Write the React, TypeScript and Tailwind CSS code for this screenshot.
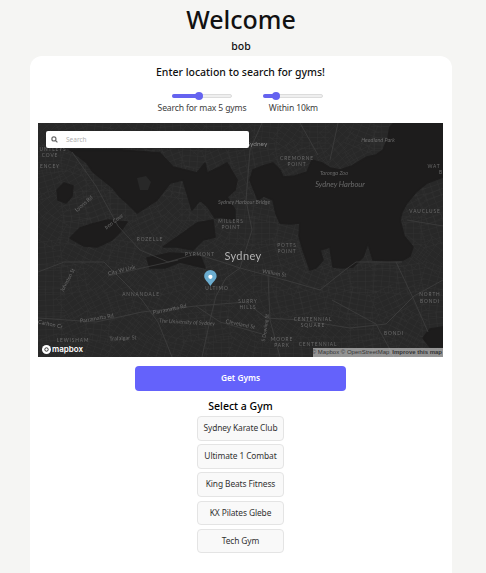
const GYMS = ["Sydney Karate Club", "Ultimate 1 Combat", "King Beats Fitness", "KX Pilates Glebe", "Tech Gym"];

// map labels in page coordinates: text, x, y, size, rotate, spaced caps, italic
const LABELS: [string, number, number, number, number, boolean, boolean][] = [
  ["Headland Park", 378, 142, 5.5, 0, false, true],
  ["CREMORNE", 297, 160, 4.8, 0, true, false],
  ["POINT", 297, 166, 4.8, 0, true, false],
  ["Taronga Zoo", 334, 175, 5.5, 0, false, true],
  ["Sydney Harbour", 340, 187, 7.5, 0, false, true],
  ["Sydney Harbour Bridge", 244, 204, 5.5, 0, false, true],
  ["MILLERS", 231, 223, 4.8, 0, true, false],
  ["POINT", 231, 229, 4.8, 0, true, false],
  ["POTTS", 287, 247, 4.8, 0, true, false],
  ["POINT", 287, 253, 4.8, 0, true, false],
  ["VAUCLUSE", 425, 213, 4.8, 0, true, false],
  ["WAT", 434, 168, 4.8, 0, true, false],
  ["B", 441, 174, 4.8, 0, true, false],
  ["UNTLEYS", 53, 151, 4.8, 0, true, false],
  ["COVE", 50, 157, 4.8, 0, true, false],
  ["ENCEY", 50, 168, 4.8, 0, true, false],
  ["Lyons Rd", 85, 205, 5.5, -40, false, false],
  ["Iron Cove", 115, 223, 5.5, -38, false, true],
  ["ROZELLE", 150, 241, 4.8, 0, true, false],
  ["PYRMONT", 200, 256, 4.8, 0, true, false],
  ["City W Link", 122, 272, 5.5, -14, false, false],
  ["Johnston St", 69, 281, 5, -62, false, false],
  ["ANNANDALE", 141, 296, 4.8, 0, true, false],
  ["ULTIMO", 217, 290, 4.8, 0, true, false],
  ["Parramatta Rd", 170, 311, 5.5, -12, false, false],
  ["Parramatta Rd", 97, 320, 5.5, -9, false, false],
  ["The University of Sydney", 187, 324, 5.5, 3, false, true],
  ["Carlton Cr", 50, 326, 5.5, 12, false, false],
  ["LEWISHAM", 73, 342, 4.8, 0, true, false],
  ["Trafalgar St", 123, 340, 5.5, -3, false, false],
  ["SURRY", 248, 303, 4.8, 0, true, false],
  ["HILLS", 248, 309, 4.8, 0, true, false],
  ["Cleveland St", 240, 326, 5.5, 12, false, false],
  ["William St", 274, 275, 5.5, 10, false, false],
  ["S Dowling St", 267, 328, 5, -82, false, false],
  ["MOORE", 282, 341, 4.8, 0, true, false],
  ["PARK", 282, 347, 4.8, 0, true, false],
  ["CENTENNIAL", 313, 321, 4.8, 0, true, false],
  ["SQUARE", 313, 327, 4.8, 0, true, false],
  ["CENTENNIAL", 318, 346, 4.8, 0, true, false],
  ["NORTH", 430, 296, 4.8, 0, true, false],
  ["BONDI", 430, 303, 4.8, 0, true, false],
  ["BONDI", 394, 335, 4.8, 0, true, false],
];

const WATER = [
  // parramatta river
  "M70 150L120 150 160 153 173 167 197 173 205 163 207 173 220 167 227 163 237 180 235 190 227 197 235 210 235 220 220 217 215 218 208 207 200 200 192 210 183 180 170 183 157 200 137 213 127 203 120 197 113 188 93 172 87 163Z",
  // main harbour
  "M253 170L263 166 273 163 280 170 283 177 295 176 307 172 312 160 322 163 330 168 340 170 352 166 367 157 376 155 383 150 388 138 390 127 394 123H443V177L435 180 427 183 416 192 407 203 402 212 400 220 404 236 413 247 410 256 403 260 388 261 373 260 368 243 363 257 353 267 343 268 333 267 330 247 320 250 323 260 316 268 310 270 303 250 299 236 300 223 290 224 280 223 276 214 273 200 264 196 258 200 254 190 250 180Z",
  // iron cove
  "M57 190L64 183 73 186 72 196 66 203 58 200Z",
  "M70 238L80 228 92 224 108 220 127 222 120 232 112 240 97 247 84 246Z",
  // white bay and blackwattle
  "M163 247L183 233 197 223 213 220 215 237 203 240 193 250 177 247Z",
  "M147 258L170 253 200 255 205 268 180 262 165 268 150 268Z",
  // bondi end
  "M423 338L430 329 443 327V347H430Z",
];

const ROADS = [
  "M72 152L96 186 118 226 140 250 168 262 196 254 222 262 240 268",
  "M240 268L292 282 320 290 345 270 356 262 402 262",
  "M38 272L64 262 104 262 120 278 142 300 158 322 172 357",
  "M108 276L142 268 178 260",
  "M142 312L196 306 246 302 266 318 300 320 350 328 386 324 414 296 443 280",
  "M38 318L96 322 142 312",
  "M202 357L210 320 216 296 226 278 240 268 252 230 246 200 250 150 262 123",
  "M268 274L270 320 280 357",
  "M196 306L220 322 262 334",
  "M300 123L318 155",
  "M338 123L330 160",
  "M407 220L443 226",
  "M396 262L414 300 428 332",
  "M332 300L376 324 394 357",
];

function mapStreets() {
  // street mesh: each 24px block gets its own grid direction, fixed seed so every render is the same
  let seed = 11;
  const rnd = () => {
    seed = (seed * 16807) % 2147483647;
    return seed / 2147483647;
  };
  const out: string[] = [];
  for (let cx = 38; cx < 443; cx += 24) {
    for (let cy = 123; cy < 357; cy += 24) {
      const a = rnd() * 1.5 - 0.75;
      const ux = Math.cos(a);
      const uy = Math.sin(a);
      for (let k = -14; k <= 14; k += 5.5) {
        const mx = cx + 12 - uy * k;
        const my = cy + 12 + ux * k;
        out.push(`M${(mx - ux * 15).toFixed(1)} ${(my - uy * 15).toFixed(1)}L${(mx + ux * 15).toFixed(1)} ${(my + uy * 15).toFixed(1)}`);
        if (Math.abs(k) < 9) {
          const nx = cx + 12 + ux * k * 1.4;
          const ny = cy + 12 + uy * k * 1.4;
          out.push(`M${(nx + uy * 15).toFixed(1)} ${(ny - ux * 15).toFixed(1)}L${(nx - uy * 15).toFixed(1)} ${(ny + ux * 15).toFixed(1)}`);
        }
      }
    }
  }
  return out.join("");
}

function MapArt() {
  return (
    <svg viewBox="38 123 405 234" className="block h-full w-full blur-[0.35px]">
      <rect x="38" y="123" width="405" height="234" fill="#282828" />
      <path d={mapStreets()} stroke="#343434" strokeWidth="0.4" fill="none" />
      {WATER.map((d, i) => (
        <path key={i} d={d} fill="#1d1c1c" stroke="#1d1c1c" strokeWidth="1.500" strokeLinejoin="round" />
      ))}
      {/* cockatoo island */}
      <path d="M137 178L146 176 151 182 148 190 140 190Z" fill="#282828" />
      {ROADS.map((d, i) => (
        <path key={i} d={d} stroke="#3f3f3f" strokeWidth="0.8" strokeLinejoin="round" fill="none" />
      ))}
      {LABELS.map(([text, x, y, size, rot, caps, italic], i) => (
        <text
          key={i}
          x={x}
          y={y}
          fontSize={size}
          textAnchor="middle"
          fill="#6a6a6a"
          fontStyle={italic ? "italic" : "normal"}
          letterSpacing={caps ? 0.9 : 0}
          transform={rot ? `rotate(${rot} ${x} ${y})` : undefined}
          fontFamily="Lato, sans-serif"
        >
          {text}
        </text>
      ))}
      <text x="243" y="260" fontSize="11" textAnchor="middle" fill="#b4b4b4" letterSpacing="0.4" fontFamily="Lato, sans-serif">
        Sydney
      </text>
      <text x="257" y="146" fontSize="6.5" textAnchor="middle" fill="#888888" fontFamily="Lato, sans-serif">
        Sydney
      </text>
      {/* marker */}
      <path d="M210.400 286C207.500 281.500 204.200 279.500 204.200 276.200A6.200 6.200 0 0 1 216.600 276.200C216.600 279.500 213.300 281.500 210.400 286Z" fill="#6badd0" />
      <circle cx="210.400" cy="276.800" r="2.100" fill="#ffffff" />
    </svg>
  );
}

function Slider({ fill, label }: { fill: string; label: string }) {
  return (
    <div className="flex flex-col items-center gap-[4px]">
      <div className="relative h-[4px] w-[60px] rounded-full border border-[#dcdcdc] bg-[#efefef]">
        <div className={`absolute -top-px -left-px h-[4px] rounded-full bg-[#6563f0] ${fill}`} />
      </div>
      <span className="text-[8.600px] leading-[12px] tracking-[-0.15px] whitespace-nowrap text-[#3c3c3c]">{label}</span>
    </div>
  );
}

export default function App() {
  return (
    <div className="flex min-h-[573px] flex-col items-center bg-[#f5f5f3] pr-[4px] font-['Noto_Sans',sans-serif] text-[#111]">
      <h1 className="mt-[4px] text-[25px] leading-[30px] font-medium">Welcome</h1>
      <p className="mt-[5px] text-[10.500px] leading-[14px] font-medium">bob</p>
      <main className="mt-[3px] flex h-[517px] w-[422px] flex-col items-center rounded-t-xl bg-white pr-px">
        <h2 className="mt-[8px] text-[10.500px] leading-[16px] font-medium">Enter location to search for gyms!</h2>
        <div className="mt-[14px] flex gap-[17px]">
          <Slider fill="w-[27px] after:absolute after:-top-[2px] after:-right-[4px] after:size-[8px] after:rounded-full after:bg-[#6563f0]" label="Search for max 5 gyms" />
          <Slider fill="w-[13px] after:absolute after:-top-[2px] after:-right-[4px] after:size-[8px] after:rounded-full after:bg-[#6563f0]" label="Within 10km" />
        </div>
        <div className="relative mt-[9px] h-[234px] w-[405px] overflow-hidden bg-[#282828]">
          <MapArt />
          <div className="absolute top-[8px] left-[8px] flex h-[17px] w-[203px] items-center gap-[8px] rounded-[2px] bg-white pl-[5px] shadow-sm">
            <svg viewBox="0 0 12 12" className="size-[7px]" fill="none" stroke="#666" strokeWidth="2">
              <circle cx="5" cy="5" r="3.500" />
              <path d="M7.500 7.500L11 11" />
            </svg>
            <span className="text-[6.500px] text-[#b0b0b0]">Search</span>
          </div>
          <div className="absolute bottom-[3px] left-[4px] flex items-center gap-[1px]">
            <svg viewBox="0 0 12 12" className="size-[9px]">
              <circle cx="6" cy="6" r="6" fill="#fff" />
              <circle cx="6" cy="6" r="2.300" fill="none" stroke="#333" strokeWidth="1.300" />
            </svg>
            <span className="font-['Inter',sans-serif] text-[8px] leading-[10px] font-semibold text-white">mapbox</span>
          </div>
          <div className="absolute right-0 bottom-0 flex h-[9px] w-[130px] items-center justify-end gap-[3px] bg-white/50 pr-[1px] font-['Liberation_Sans',sans-serif] text-[6px] whitespace-nowrap text-[#333]">
            <span>© Mapbox © OpenStreetMap</span>
            <span className="font-bold">Improve this map</span>
          </div>
        </div>
        <button className="mt-[9px] h-[25px] w-[211px] rounded-[4px] bg-[#6462fb] text-[8.300px] font-semibold text-white">Get Gyms</button>
        <h3 className="mt-[8px] text-[10.500px] leading-[14px] font-medium text-black">Select a Gym</h3>
        <div className="mt-[3px] flex flex-col gap-[3.700px]">
          {GYMS.map((g) => (
            <button key={g} className="h-[24.500px] w-[87px] rounded-[4px] border border-[#e4e4e4] bg-[#f9f9f9] text-[8.400px] tracking-[-0.1px] whitespace-nowrap text-[#333]">
              {g}
            </button>
          ))}
        </div>
      </main>
    </div>
  );
}
